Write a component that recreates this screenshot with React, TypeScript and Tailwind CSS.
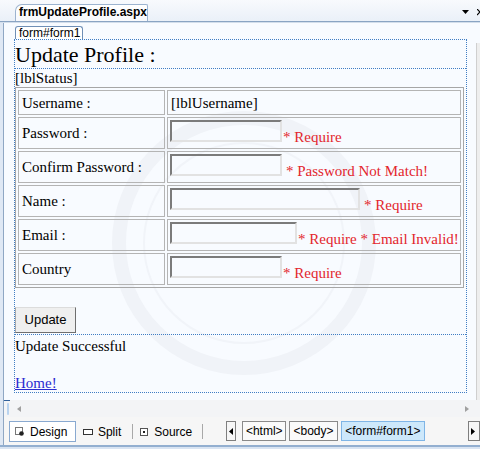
import React from "react";

const serif = "font-['Liberation_Serif',serif]";

function Input({ w }: { w: number }) {
  return (
    <div
      className="h-[22px] shrink-0 border-2 border-t-[#7b7b7b] border-l-[#7b7b7b] border-r-[#e2e2e2] border-b-[#e2e2e2]"
      style={{ width: w }}
    />
  );
}

function LabelCell({ children }: { children: React.ReactNode }) {
  return (
    <div className="border border-[#b4b4b4] flex items-center pl-[3px] text-[15px] leading-[18px] text-black whitespace-nowrap">
      {children}
    </div>
  );
}

function FieldCell({ w, msg, gap }: { w: number; msg: string; gap?: boolean }) {
  return (
    <div className="border border-[#b4b4b4] flex items-start pl-[2px] pt-[2px]">
      <Input w={w} />
      <span className={`mt-[8px] text-[15px] leading-[18px] text-[#e3262d] whitespace-nowrap ${gap ? "ml-[4px]" : "ml-[1px]"}`}>
        {msg}
      </span>
    </div>
  );
}

export default function App() {
  return (
    <div className="w-[480px] h-[449px] overflow-hidden flex flex-col bg-[#dfe8f4] font-['Liberation_Sans',sans-serif] text-black">
      {/* Tab strip */}
      <div className="h-[21px] shrink-0 flex bg-gradient-to-b from-[#f8fafd] to-[#eaf0f8]">
        <div className="self-end ml-[15px] h-[17px] w-[133px] bg-gradient-to-b from-white to-[#f7f9fc] border border-b-0 border-[#9cb3cf] rounded-tl-[7px] rounded-tr-[2px] pl-[3px] text-[12px] font-bold leading-[14px] whitespace-nowrap">
          frmUpdateProfile.aspx
        </div>
        <div className="ml-auto flex items-start pt-[10px]">
          <svg width="7" height="4" viewBox="0 0 7 4" className="mr-[8px]">
            <polygon points="0,0 7,0 3.5,4" fill="#000" />
          </svg>
          <svg width="3" height="7" viewBox="0 0 3 7" className="-mt-[1px]">
            <path d="M0 0 L3 3 M0 6 L3 3" stroke="#000" strokeWidth="1.2" />
          </svg>
        </div>
      </div>
      <div className="h-[2px] shrink-0 border-t border-[#8aa4c3] bg-[#d3deeb]" />

      {/* Body with left frame */}
      <div className="flex-1 flex flex-col ml-[3px] border-l border-[#8fa7c4] min-h-0">
        {/* Main row */}
        <div className="h-[377px] shrink-0 flex">
          <div className="relative flex-1 bg-[#f8fbff] pt-[3px] pl-[10px] overflow-hidden">
            {/* watermark */}
            <svg className="absolute left-[105px] top-[85px]" width="270" height="270" viewBox="0 0 270 270">
              <circle cx="135" cy="135" r="125" fill="none" stroke="#f0f3f8" strokeWidth="14" />
              <circle cx="135" cy="135" r="100" fill="none" stroke="#f1f4f9" strokeWidth="2" />
            </svg>
            <div className="relative">
              {/* form tag */}
              <div className="ml-[1px] w-[68px] h-[13px] border border-b-0 border-[#6f8fb6] rounded-t-[3px] bg-white pl-[3px] text-[12px] leading-[12px] whitespace-nowrap">
                form#form1
              </div>
              {/* form */}
              <div className={`w-[453px] border border-dotted border-[#3f7dc4] ${serif}`}>
                <div className="h-[29px] border-b border-dotted border-[#3f7dc4] pt-[1px] text-[22px] leading-[27px] whitespace-nowrap">
                  Update Profile :
                </div>
                <div className="text-[15px] leading-[18px]">[lblStatus]</div>
                <div className="w-[449px] border border-[#a6a6a6] p-[2px] grid grid-cols-[147px_294px] grid-rows-[25px_32px_32px_32px_32px_32px] gap-[2px]">
                  <LabelCell>Username :</LabelCell>
                  <div className="border border-[#b4b4b4] flex items-center pl-[3px] text-[15px] leading-[18px]">
                    [lblUsername]
                  </div>
                  <LabelCell>Password :</LabelCell>
                  <FieldCell w={112} msg="* Require" />
                  <LabelCell>Confirm Password :</LabelCell>
                  <FieldCell w={112} msg="* Password Not Match!" gap />
                  <LabelCell>Name :</LabelCell>
                  <FieldCell w={190} msg="* Require" gap />
                  <LabelCell>Email :</LabelCell>
                  <FieldCell w={127} msg="* Require * Email Invalid!" />
                  <LabelCell>Country</LabelCell>
                  <FieldCell w={112} msg="* Require" />
                </div>
                <div className="pt-[19px] pb-[1px] border-b border-dotted border-[#3f7dc4]">
                  <div className="w-[61px] h-[26px] flex items-center justify-center bg-[#efefef] border border-t-[#dcdcdc] border-l-[#a8a8a8] border-r-[#6e6e6e] border-b-[#6e6e6e] font-['Liberation_Sans',sans-serif] text-[13px]">
                    Update
                  </div>
                </div>
                <div className="pt-[2px] text-[15px] leading-[18px]">Update Successful</div>
                <div className="mt-[19px] text-[15px] leading-[18px]">
                  <span className="text-[#2b2bd0] underline">Home!</span>
                </div>
              </div>
            </div>
          </div>
          <div className="w-[4px] shrink-0 flex flex-col bg-[#f8fbff]">
            <div className="h-[20px]" />
            <div className="flex-1 border-l border-[#cfcfcf] bg-[#eeeeee]" />
          </div>
        </div>

        {/* Horizontal scroll row */}
        <div className="h-[17px] shrink-0 flex items-center bg-[#f3f4f6] relative">
          <div className="absolute left-0 top-0 w-[6px] h-[1px] bg-[#2f5f9a]" />
          <div className="absolute left-[3px] top-[3px] w-[2px] h-[12px] rounded-full bg-[#b9d3ef]" />
          <svg width="4" height="6" viewBox="0 0 4 6" className="ml-[13px]">
            <polygon points="4,0 4,6 0,3" fill="#a0a0a0" />
          </svg>
          <svg width="4" height="6" viewBox="0 0 4 6" className="ml-auto mr-[11px]">
            <polygon points="0,0 0,6 4,3" fill="#a0a0a0" />
          </svg>
        </div>

        {/* Toolbar */}
        <div className="h-[28px] shrink-0 flex items-start pt-[4px] bg-[#f6f6f6] text-[12px] leading-[14px] whitespace-nowrap">
          <div className="ml-[5px] w-[68px] h-[21px] border border-[#89a9d0] bg-white flex items-center pl-[5px]">
            <svg width="9" height="9" viewBox="0 0 9 9" className="mr-[6px]">
              <rect x="0.5" y="0.5" width="7" height="7" fill="#fff" stroke="#777" />
              <circle cx="6.5" cy="6.5" r="2.3" fill="#222" />
            </svg>
            Design
          </div>
          <div className="ml-[7px] h-[21px] flex items-center">
            <svg width="10" height="6" viewBox="0 0 10 6" className="mr-[5px]">
              <rect x="0.5" y="0.5" width="9" height="5" fill="#fff" stroke="#333" />
            </svg>
            Split
          </div>
          <div className="ml-[11px] mt-[3px] w-[1px] h-[15px] bg-[#a8a8a8]" />
          <div className="ml-[7px] h-[21px] flex items-center">
            <svg width="8" height="8" viewBox="0 0 8 8" className="mr-[6px]">
              <rect x="0.5" y="0.5" width="7" height="7" fill="#fff" stroke="#555" />
              <rect x="3" y="3" width="2" height="2" fill="#222" />
            </svg>
            Source
          </div>
          <div className="ml-[10px] mt-[3px] w-[1px] h-[15px] bg-[#a8a8a8]" />
          <div className="ml-[23px] w-[10px] h-[20px] border border-[#7f7f7f] flex items-center justify-center">
            <svg width="4" height="7" viewBox="0 0 4 7">
              <polygon points="4,0 4,7 0,3.5" fill="#000" />
            </svg>
          </div>
          <div className="ml-[6px] w-[45px] h-[20px] border border-[#8a8a8a] bg-[#fafafa] flex items-center justify-center">
            &lt;html&gt;
          </div>
          <div className="ml-[3px] w-[49px] h-[20px] border border-[#8a8a8a] bg-[#fafafa] flex items-center justify-center">
            &lt;body&gt;
          </div>
          <div className="ml-[3px] w-[86px] h-[20px] border border-[#7fb5e6] bg-[#cde8fb] flex items-center justify-center">
            &lt;form#form1&gt;
          </div>
          <div className="ml-[43px] w-[12px] h-[20px] border border-[#7f7f7f] flex items-center pl-[2px]">
            <svg width="4" height="7" viewBox="0 0 4 7">
              <polygon points="0,0 0,7 4,3.5" fill="#000" />
            </svg>
          </div>
        </div>
      </div>
      <div className="h-[4px] shrink-0 border-t-2 border-[#93afd0] bg-[#d9e4f2]" />
    </div>
  );
}
